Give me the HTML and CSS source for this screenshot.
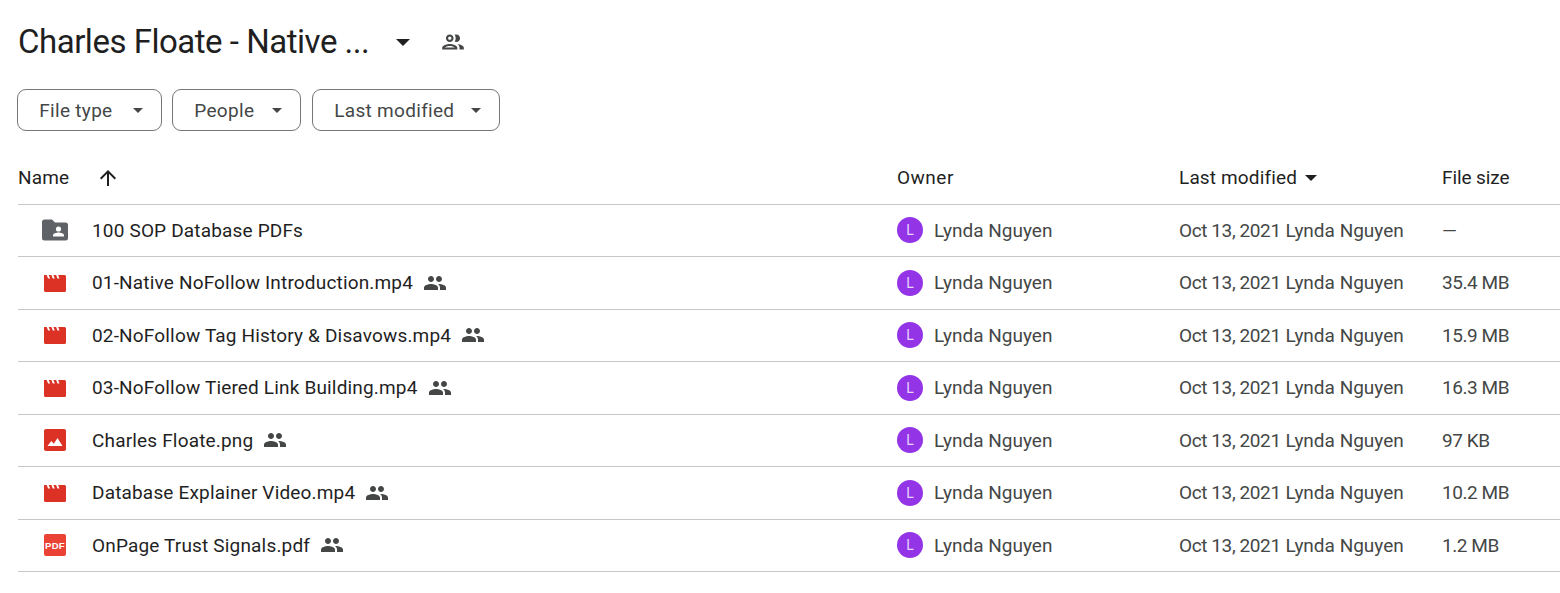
FILE: index.html
```html
<!DOCTYPE html>
<html lang="en">
<head>
<meta charset="utf-8">
<title>Charles Floate - Native NoFollow</title>
<link rel="stylesheet" href="styles.css">
</head>
<body>
<svg class="defs" width="0" height="0" aria-hidden="true">
  <symbol id="shared" viewBox="0 0 24 24"><path d="M16 11c1.66 0 2.99-1.34 2.99-3S17.66 5 16 5c-1.66 0-3 1.34-3 3s1.34 3 3 3zm-8 0c1.66 0 2.99-1.34 2.99-3S9.66 5 8 5C6.34 5 5 6.34 5 8s1.34 3 3 3zm0 2c-2.33 0-7 1.17-7 3.5V19h14v-2.5c0-2.33-4.67-3.5-7-3.5zm8 0c-.29 0-.62.02-.97.05 1.16.84 1.97 1.97 1.97 3.45V19h6v-2.5c0-2.33-4.67-3.5-7-3.5z"/></symbol>
  <symbol id="video" viewBox="0 0 22 18"><path fill="#dc3125" d="M0 1h2.700l1.400 3.500h2l-1.400-3.500h2.700l1.400 3.500h2l-1.400-3.500h2.700l1.400 3.500h2l-1.400-3.500H20.500A1.500 1.500 0 0 1 22 2.500v14a1.500 1.500 0 0 1-1.500 1.500h-19A1.500 1.500 0 0 1 0 16.500z"/></symbol>
  <symbol id="image" viewBox="0 0 22 22"><rect width="22" height="22" rx="2" fill="#dc3125"/><path fill="#fff" d="M3.500 17l3.800-5 2.500 2.800L13.500 9l5 8z"/></symbol>
  <symbol id="folder" viewBox="0 0 26 22"><path fill="#5f6368" d="M2.500 0.500h7.500l3 3h10.500a2.500 2.500 0 0 1 2.500 2.500v13a2.500 2.500 0 0 1-2.500 2.500h-21A2.500 2.500 0 0 1 0 19V3A2.500 2.500 0 0 1 2.500 0.500z"/><circle cx="16.500" cy="10" r="2.600" fill="#fff"/><path fill="#fff" d="M11 17.500v-1.300c0-1.900 3.500-2.800 5.500-2.800s5.500.9 5.500 2.800v1.300z"/></symbol>
</svg>
<main class="page">
  <header class="title-row">
    <h1 class="title">Charles Floate - Native ...</h1>
    <span class="title-caret"></span>
    <svg class="title-people" viewBox="0 0 24 24"><path d="M9 13.750c-2.340 0-7 1.170-7 3.500V19h14v-1.750c0-2.330-4.660-3.500-7-3.500zM4.340 17c.84-.58 2.870-1.250 4.660-1.250s3.820.67 4.660 1.250H4.340zM9 12c1.930 0 3.500-1.570 3.500-3.500S10.930 5 9 5 5.500 6.570 5.500 8.500 7.070 12 9 12zm0-5c.83 0 1.500.67 1.500 1.500S9.830 10 9 10s-1.500-.67-1.500-1.500S8.170 7 9 7zm7.040 6.810c1.160.84 1.960 1.960 1.960 3.440V19h4v-1.750c0-2.020-3.500-3.170-5.960-3.440zM15 12c1.930 0 3.500-1.570 3.500-3.500S16.930 5 15 5c-.54 0-1.040.13-1.500.35.63.89 1 1.980 1 3.150s-.37 2.260-1 3.150c.46.22.96.35 1.500.35z"/></svg>
  </header>
  <div class="filters">
    <button class="chip chip-type">File type<span class="chip-caret"></span></button>
    <button class="chip chip-people">People<span class="chip-caret"></span></button>
    <button class="chip chip-date">Last modified<span class="chip-caret"></span></button>
  </div>
  <section class="table">
    <div class="row head">
      <div class="col-name"><span>Name</span><svg class="sort-arrow" viewBox="0 0 24 24"><path d="M4 12l1.410 1.410L11 7.830V20h2V7.830l5.580 5.590L20 12l-8-8-8 8z"/></svg></div>
      <div class="head-owner">Owner</div>
      <div class="col-mod">Last modified<span class="mod-caret"></span></div>
      <div class="head-size">File size</div>
    </div>

    <div class="row">
      <div class="col-name"><span class="file-icon"><svg class="ic-folder"><use href="#folder"/></svg></span><span class="file-name">100 SOP Database PDFs</span></div>
      <div class="owner"><span class="avatar">L</span>Lynda Nguyen</div>
      <div class="modified"><span class="date">Oct 13, 2021</span> Lynda Nguyen</div>
      <div class="size">—</div>
    </div>
    <div class="row">
      <div class="col-name"><span class="file-icon"><svg class="ic-video"><use href="#video"/></svg></span><span class="file-name">01-Native NoFollow Introduction.mp4</span><svg class="shared"><use href="#shared"/></svg></div>
      <div class="owner"><span class="avatar">L</span>Lynda Nguyen</div>
      <div class="modified"><span class="date">Oct 13, 2021</span> Lynda Nguyen</div>
      <div class="size">35.4 MB</div>
    </div>
    <div class="row">
      <div class="col-name"><span class="file-icon"><svg class="ic-video"><use href="#video"/></svg></span><span class="file-name">02-NoFollow Tag History &amp; Disavows.mp4</span><svg class="shared"><use href="#shared"/></svg></div>
      <div class="owner"><span class="avatar">L</span>Lynda Nguyen</div>
      <div class="modified"><span class="date">Oct 13, 2021</span> Lynda Nguyen</div>
      <div class="size">15.9 MB</div>
    </div>
    <div class="row">
      <div class="col-name"><span class="file-icon"><svg class="ic-video"><use href="#video"/></svg></span><span class="file-name">03-NoFollow Tiered Link Building.mp4</span><svg class="shared"><use href="#shared"/></svg></div>
      <div class="owner"><span class="avatar">L</span>Lynda Nguyen</div>
      <div class="modified"><span class="date">Oct 13, 2021</span> Lynda Nguyen</div>
      <div class="size">16.3 MB</div>
    </div>
    <div class="row">
      <div class="col-name"><span class="file-icon"><svg class="ic-image"><use href="#image"/></svg></span><span class="file-name">Charles Floate.png</span><svg class="shared"><use href="#shared"/></svg></div>
      <div class="owner"><span class="avatar">L</span>Lynda Nguyen</div>
      <div class="modified"><span class="date">Oct 13, 2021</span> Lynda Nguyen</div>
      <div class="size">97 KB</div>
    </div>
    <div class="row">
      <div class="col-name"><span class="file-icon"><svg class="ic-video"><use href="#video"/></svg></span><span class="file-name">Database Explainer Video.mp4</span><svg class="shared"><use href="#shared"/></svg></div>
      <div class="owner"><span class="avatar">L</span>Lynda Nguyen</div>
      <div class="modified"><span class="date">Oct 13, 2021</span> Lynda Nguyen</div>
      <div class="size">10.2 MB</div>
    </div>
    <div class="row">
      <div class="col-name"><span class="file-icon"><span class="ic-pdf">PDF</span></span><span class="file-name">OnPage Trust Signals.pdf</span><svg class="shared"><use href="#shared"/></svg></div>
      <div class="owner"><span class="avatar">L</span>Lynda Nguyen</div>
      <div class="modified"><span class="date">Oct 13, 2021</span> Lynda Nguyen</div>
      <div class="size">1.2 MB</div>
    </div>
  </section>
</main>
</body>
</html>
```

FILE: styles.css
```css
* { box-sizing: border-box; }
html, body { margin: 0; height: 100%; background: #fff; overflow: hidden; }
body { font-family: Roboto, "Liberation Sans", sans-serif; color: #1f1f1f; font-size: 19px; }
.defs { position: absolute; }
.page { padding: 0 0 0 18px; }

.title-row { display: flex; align-items: center; height: 82px; }
.title { margin: 2px 0 0; width: 378px; font-size: 33px; font-weight: 400; letter-spacing: -0.480px; line-height: 40px; white-space: nowrap; }
.title-caret { width: 0; height: 0; border-left: 7.500px solid transparent; border-right: 7.500px solid transparent; border-top: 7.500px solid #1f1f1f; margin: 2px 30px 0 0; }
.title-people { width: 26px; height: 26px; margin-top: 2px; fill: #444746; }

.filters { display: flex; gap: 10.500px; height: 42px; margin: 7px 0 0 -0.700px; }
.chip { display: flex; align-items: center; justify-content: space-between; height: 42px; padding: 1px 18px 0 21px; border: 1px solid #747775; border-radius: 9px; background: #fff; color: #444746; font: inherit; letter-spacing: 0.300px; }
.chip-type { width: 144.500px; }
.chip-people { width: 128.500px; }
.chip-date { width: 188px; margin-left: 1px; }
.chip-caret { width: 0; height: 0; border-left: 5.500px solid transparent; border-right: 5.500px solid transparent; border-top: 5.500px solid #444746; }

.table { margin-top: 21px; }
.row { display: grid; grid-template-columns: 879px 282px 263px 1fr; align-items: center; height: 52.500px; border-bottom: 1px solid #c7c7c7; }
.head { letter-spacing: 0.150px; }
.head-owner { letter-spacing: 0.500px; }
.head-size { letter-spacing: -0.100px; }
.col-name { display: flex; align-items: center; }
.sort-arrow { width: 24px; height: 24px; margin-left: 27px; fill: #1f1f1f; }
.col-mod { display: flex; align-items: center; }
.mod-caret { width: 0; height: 0; margin-left: 8px; border-left: 6.500px solid transparent; border-right: 6.500px solid transparent; border-top: 6.500px solid #1f1f1f; }

.file-icon { display: flex; align-items: center; justify-content: center; width: 74px; flex: none; }
.file-name { letter-spacing: 0.170px; }
.ic-folder { width: 26px; height: 22px; }
.ic-video { width: 22px; height: 18px; }
.ic-image { width: 22px; height: 22px; }
.ic-pdf { display: flex; align-items: center; justify-content: center; width: 22px; height: 22px; border-radius: 2px; background: #ea4335; color: #fff; font-family: "Liberation Sans", sans-serif; font-size: 9.500px; font-weight: 700; letter-spacing: 0.300px; }
.shared { width: 24px; height: 24px; margin-left: 10px; fill: #444746; }

.owner { display: flex; align-items: center; color: #444746; }
.avatar { display: flex; align-items: center; justify-content: center; width: 26px; height: 26px; margin-right: 11px; border-radius: 50%; background: #9334e6; color: #e9d5fb; font-size: 14px; }
.modified { color: #444746; }
.date { letter-spacing: -0.400px; }
.size { color: #444746; letter-spacing: -0.450px; }
```
